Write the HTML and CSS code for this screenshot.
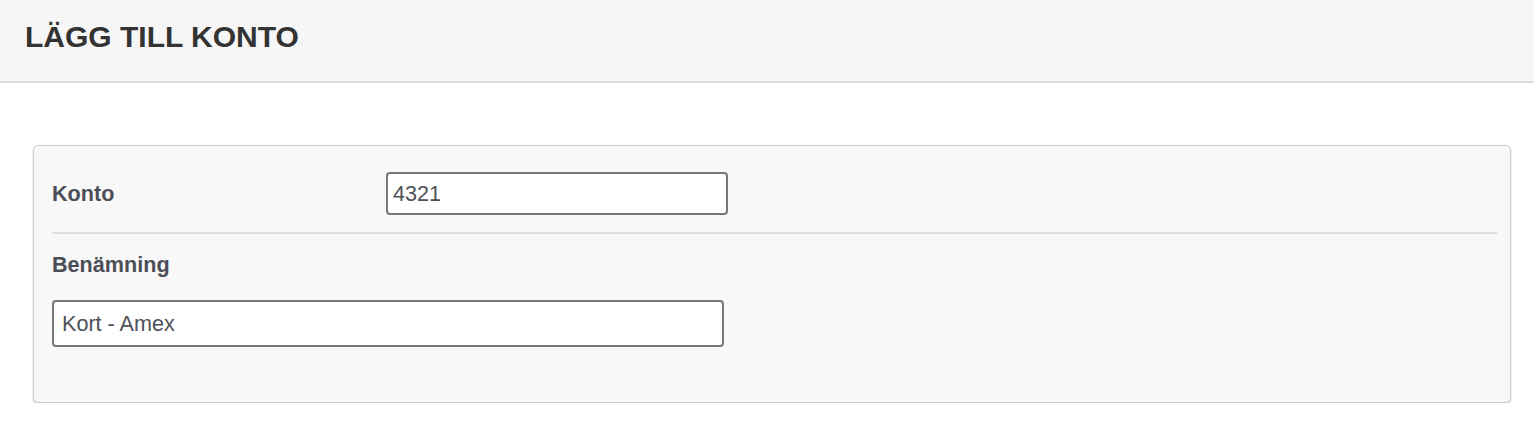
FILE: index.html
```html
<!DOCTYPE html>
<html lang="sv">
<head>
<meta charset="utf-8">
<title>Lägg till konto</title>
<link rel="stylesheet" href="styles.css">
</head>
<body>
<header class="page-header">
  <h1 class="page-title">LÄGG TILL KONTO</h1>
</header>
<main class="content">
  <section class="panel">
    <div class="row row-inline">
      <label class="field-label label-fixed" for="konto">Konto</label>
      <input class="text-input input-short" id="konto" type="text" value="4321">
    </div>
    <div class="row row-stacked">
      <label class="field-label" for="benamning">Benämning</label>
      <input class="text-input input-long" id="benamning" type="text" value="Kort - Amex">
    </div>
  </section>
</main>
</body>
</html>
```

FILE: styles.css
```css
* { box-sizing: border-box; }

html, body {
  margin: 0;
  padding: 0;
  background: #ffffff;
  font-family: "Liberation Sans", Arial, Helvetica, sans-serif;
}

.page-header {
  height: 83px;
  padding: 20px 25px 0;
  background: #f6f6f6;
  border-bottom: 2px solid #dcdcdc;
}

.page-title {
  margin: 0;
  font-size: 30px;
  line-height: 34px;
  font-weight: 700;
  color: #333333;
}

.content {
  padding: 62px 23px 0 33px;
}

.panel {
  background: #f8f8f8;
  border: 1px solid #cbcbcb;
  border-radius: 5px;
  box-shadow: 0 1px 2px rgba(0, 0, 0, 0.2);
  padding: 0 13px 55px 18px;
}

.row-inline {
  display: flex;
  align-items: center;
  padding: 26px 0 17px;
  border-bottom: 2px solid #dedede;
}

.row-stacked {
  display: flex;
  flex-direction: column;
  align-items: flex-start;
  gap: 23px;
  padding-top: 19px;
}

.field-label {
  font-size: 21.6px;
  line-height: 24px;
  font-weight: 700;
  color: #4b4e56;
}

.label-fixed {
  width: 334px;
  flex: none;
}

.text-input {
  font-family: "Liberation Sans", Arial, Helvetica, sans-serif;
  font-size: 21.6px;
  color: #4e5158;
  background: #ffffff;
  border: 2px solid #777777;
  border-radius: 4px;
  outline: none;
  margin: 0;
}

.input-short {
  width: 342px;
  height: 43px;
  padding: 0 5px;
}

.input-long {
  width: 672px;
  height: 47px;
  padding: 0 8px;
}
```
